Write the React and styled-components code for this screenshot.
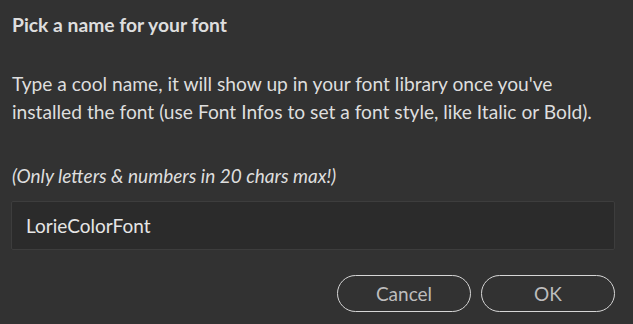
import React, { useState } from 'react'
import styled, { createGlobalStyle } from 'styled-components'

const GlobalStyle = createGlobalStyle`
  html, body {
    margin: 0;
    background: #323232;
  }
  body {
    font-family: Lato, "Noto Sans", sans-serif;
    color: #dedede;
  }
`

const Dialog = styled.div`
  width: 633px;
  height: 324px;
  box-sizing: border-box;
  padding: 13px 18px 0 12px;
  display: flex;
  flex-direction: column;
`

const Title = styled.h1`
  margin: 0;
  font-size: 19.3px;
  font-weight: 700;
  line-height: 24px;
`

const Text = styled.p`
  margin: 33px 0 0;
  font-size: 19.2px;
  line-height: 28px;
  white-space: nowrap;
`

const Hint = styled.p`
  margin: 36px 0 0;
  font-size: 19px;
  font-style: italic;
  line-height: 28px;
`

const NameInput = styled.input`
  margin: 11px 0 0 -1px;
  height: 49px;
  box-sizing: border-box;
  width: 604px;
  padding: 0 14px;
  background: #2b2b2b;
  border: 1px solid #3d3d3d;
  border-radius: 2px;
  color: #e6e6e6;
  font-family: inherit;
  font-size: 19px;
  outline: none;
`

const Actions = styled.div`
  display: flex;
  justify-content: flex-end;
  gap: 10px;
  margin-top: 25px;
`

const Button = styled.button`
  width: 134px;
  height: 37px;
  border-radius: 19px;
  border: 1.5px solid #d6d6d6;
  background: transparent;
  color: #bdbdbd;
  font-family: inherit;
  font-size: 19px;
  cursor: pointer;
`

const App = () => {
  const [name, setName] = useState('LorieColorFont')

  return (
    <>
      <GlobalStyle />
      <Dialog>
        <Title>Pick a name for your font</Title>
        <Text>
          Type a cool name, it will show up in your font library once you've
          <br />
          installed the font (use Font Infos to set a font style, like Italic or Bold).
        </Text>
        <Hint>(Only letters &amp; numbers in 20 chars max!)</Hint>
        <NameInput value={name} onChange={(e) => setName(e.target.value)} />
        <Actions>
          <Button type="button">Cancel</Button>
          <Button type="button">OK</Button>
        </Actions>
      </Dialog>
    </>
  )
}

export default App
